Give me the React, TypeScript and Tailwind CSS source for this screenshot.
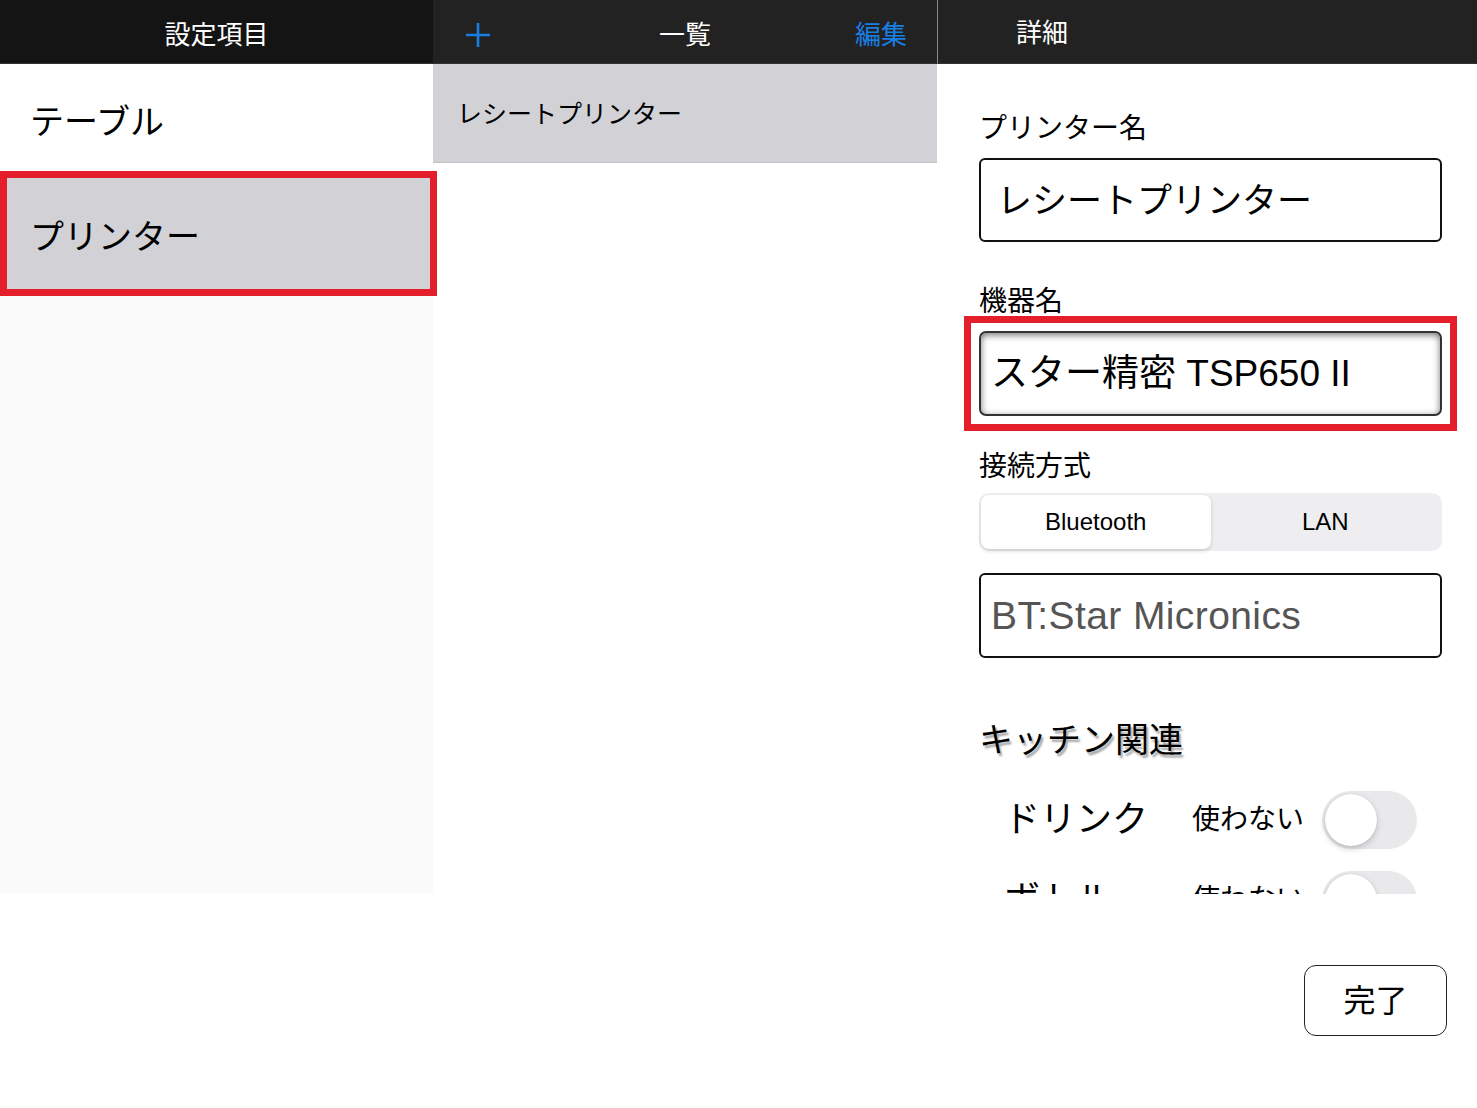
import { useState } from 'react';

const font = "font-['Liberation_Sans','Noto_Sans_CJK_JP',sans-serif]";

function Toggle({ on }: { on: boolean }) {
  return (
    <div className={`w-[95px] h-[58px] rounded-full p-[3px] flex shrink-0 ${on ? 'bg-[#34c759] justify-end' : 'bg-[#e9e9eb] justify-start'}`}>
      <div className="w-[52px] h-[52px] rounded-full bg-white shadow-[0_3px_6px_rgba(0,0,0,0.18),0_0_1px_rgba(0,0,0,0.2)]" />
    </div>
  );
}

export default function App() {
  const [conn, setConn] = useState<'bt' | 'lan'>('bt');
  const kitchen = [
    { label: 'ドリンク', on: false },
    { label: 'ボトル', on: false },
  ];

  return (
    <div className={`w-[1477px] h-[1108px] bg-white flex flex-col text-black ${font}`}>
      <div className="h-[894px] shrink-0 flex">
        {/* settings list */}
        <div className="w-[433px] flex flex-col bg-[#fafafa]">
          <div className="h-16 shrink-0 bg-[#141414] border-b border-[#333] flex items-center justify-center pt-[6px]">
            <span className="text-white text-[26px] leading-none">設定項目</span>
          </div>
          <div className="h-[107px] shrink-0 bg-white flex items-center pl-[30px] pt-[8px]">
            <span className="text-[34px] leading-none">テーブル</span>
          </div>
          <div className="relative h-[125px] shrink-0 bg-[#d1d1d6] flex items-center pl-[30px] pt-[6px]">
            <span className="text-[34px] leading-none">プリンター</span>
            <div className="absolute inset-y-0 left-0 -right-[4px] border-[7px] border-[#e41f2b]" />
          </div>
        </div>

        {/* list */}
        <div className="w-[504px] flex flex-col bg-white">
          <div className="h-16 shrink-0 bg-[#222222] border-b border-[#333] grid grid-cols-3 items-center pt-[6px]">
            <div className="pl-[31px] flex">
              <svg width="28" height="28" viewBox="0 0 28 28" className="text-[#1a7fe5]">
                <path d="M14 2v24M2 14h24" stroke="currentColor" strokeWidth="2.6" fill="none" />
              </svg>
            </div>
            <span className="text-white text-[26px] leading-none text-center">一覧</span>
            <span className="text-[#1a7fe5] text-[26px] leading-none text-right pr-[30px]">編集</span>
          </div>
          <div className="h-[99px] shrink-0 bg-[#d1d1d6] border-b border-[#c4c4c8] flex items-center pl-[24px] pt-[2px]">
            <span className="text-[25px] leading-none">レシートプリンター</span>
          </div>
        </div>

        {/* detail */}
        <div className="flex-1 flex flex-col bg-white overflow-hidden">
          <div className="h-16 shrink-0 bg-[#222222] border-l border-[#8a8a8a] border-b border-b-[#333] flex items-center pl-[78px] pt-[2px]">
            <span className="text-white text-[26px] leading-none">詳細</span>
          </div>
          <div className="flex-1 overflow-hidden pl-[42px] pr-[35px] flex flex-col">
            <div className="mt-[46px] h-9 shrink-0 flex items-center text-[28px] pt-[2px]">プリンター名</div>
            <div className="mt-[12px] h-[84px] shrink-0 border-2 border-[#111] rounded-[6px] flex items-center pl-[16px] text-[35px] leading-none">
              レシートプリンター
            </div>

            <div className="mt-[42px] h-9 shrink-0 flex items-center text-[28px]">機器名</div>
            <div className="relative mt-[11px] h-[85px] shrink-0">
              <div className="h-full border-2 border-[#333] rounded-[7px] shadow-[inset_0_2px_7px_rgba(0,0,0,0.55)] flex items-center pl-[10px] text-[37px] leading-none">
                スター精密 TSP650 II
              </div>
              <div className="absolute -inset-[15px] border-[7px] border-[#e41f2b]" />
            </div>

            <div className="mt-[33px] h-9 shrink-0 flex items-center text-[28px]">接続方式</div>
            <div className="mt-[8px] h-[58px] shrink-0 bg-[#eeeef0] rounded-[10px] p-[2px] flex">
              <button
                onClick={() => setConn('bt')}
                className={`flex-1 rounded-[8px] text-[24px] ${conn === 'bt' ? 'bg-white shadow-[0_2px_4px_rgba(0,0,0,0.15)]' : ''}`}
              >
                Bluetooth
              </button>
              <button
                onClick={() => setConn('lan')}
                className={`flex-1 rounded-[8px] text-[24px] ${conn === 'lan' ? 'bg-white shadow-[0_2px_4px_rgba(0,0,0,0.15)]' : ''}`}
              >
                LAN
              </button>
            </div>

            <div className="mt-[22px] h-[85px] shrink-0 border-2 border-[#111] rounded-[6px] flex items-center pl-[10px] text-[39px] tracking-[0.4px] leading-none text-[#555]">
              BT:Star Micronics
            </div>

            <div className="mt-[60px] h-11 shrink-0 flex items-center text-[34px] [text-shadow:2px_3px_2px_rgba(0,0,0,0.35)]">
              キッチン関連
            </div>

            <div className="mt-[29px] shrink-0 flex flex-col gap-[22px]">
              {kitchen.map(k => (
                <div key={k.label} className="h-[58px] shrink-0 flex items-center pl-[25px]">
                  <span className="w-[188px] text-[36px] leading-none">{k.label}</span>
                  <span className="w-[130px] text-[28px] leading-none">{k.on ? '使う' : '使わない'}</span>
                  <Toggle on={k.on} />
                </div>
              ))}
            </div>
          </div>
        </div>
      </div>

      <div className="flex-1 flex justify-end items-start pt-[71px] pr-[30px]">
        <button className="w-[143px] h-[71px] border-[1.5px] border-[#222] rounded-[12px] text-[32px] leading-none">
          完了
        </button>
      </div>
    </div>
  );
}
